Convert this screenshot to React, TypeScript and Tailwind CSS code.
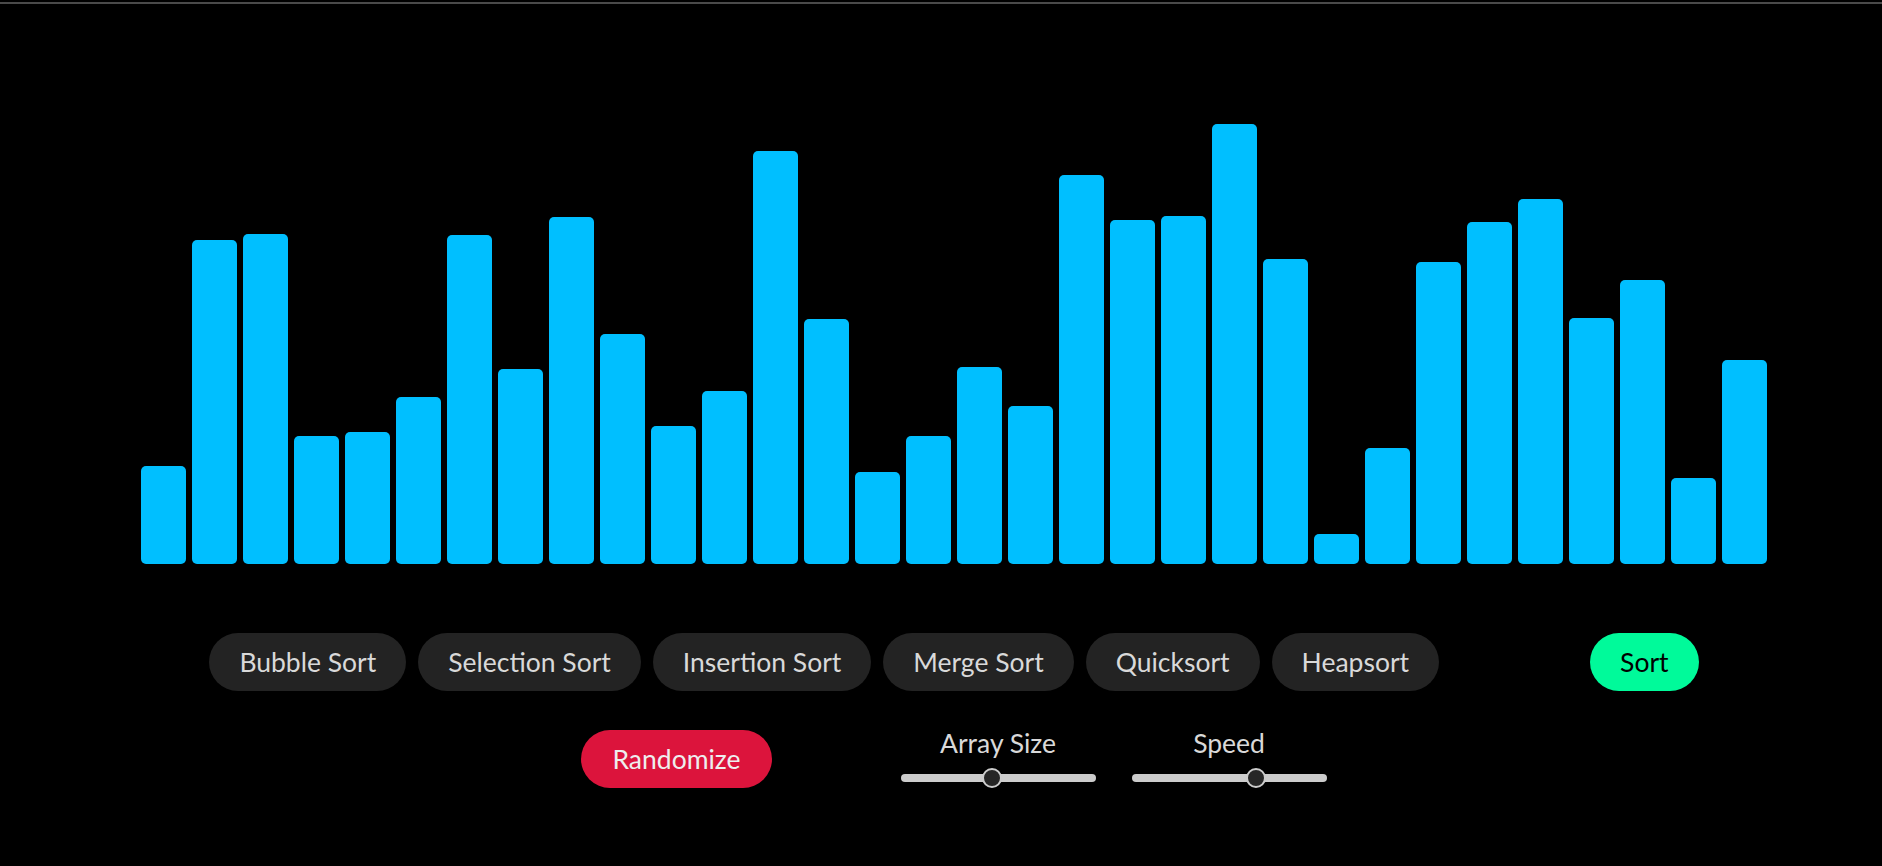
import { useState } from 'react'

const BAR_HEIGHTS = [
  98, 324, 330, 128, 132, 167, 329, 195, 347, 230, 138, 173, 413, 245, 92, 128,
  197, 158, 389, 344, 348, 440, 305, 30, 116, 302, 342, 365, 246, 284, 86, 204,
]

const ALGORITHMS = ['Bubble Sort', 'Selection Sort', 'Insertion Sort', 'Merge Sort', 'Quicksort', 'Heapsort']

const TRACK_W = 195
const THUMB_W = 20

function Slider({ label, value, min, max }: { label: string; value: number; min: number; max: number }) {
  const left = ((value - min) / (max - min)) * (TRACK_W - THUMB_W)
  return (
    <div className="flex flex-col items-center w-[195px] pb-[10px]">
      <span className="text-[26.5px] leading-[34px] text-[#d9d9d9]">{label}</span>
      <div className="relative mt-[14px] w-[195px] h-[8px] rounded-full bg-[#cccccc]">
        <div
          className="absolute top-[-6px] w-[20px] h-[20px] rounded-full bg-[#262626] border-2 border-[#cccccc]"
          style={{ left }}
        />
      </div>
    </div>
  )
}

export default function App() {
  const [bars] = useState(BAR_HEIGHTS)
  const [arraySize] = useState(32)
  const [speed] = useState(66)

  return (
    <div className="min-h-screen bg-black font-['Lato','Open_Sans',sans-serif]">
      <div className="pt-[2px]">
        <div className="h-[2px] bg-[#4a4a4a]" />
      </div>

      <div className="pl-[26px]">
        {/* bars */}
        <div className="h-[560px] flex items-end justify-center gap-[6px]">
          {bars.map((h, i) => (
            <div key={i} className="w-[45px] rounded-[5px] bg-[#00bfff]" style={{ height: h }} />
          ))}
        </div>

        {/* algorithm buttons */}
        <div className="mt-[69px] flex justify-center items-center">
          <div className="flex gap-[12px]">
            {ALGORITHMS.map((a) => (
              <button
                key={a}
                className="h-[58px] px-[30px] rounded-full bg-[#232323] text-[#d9d9d9] text-[26.5px] leading-none"
              >
                {a}
              </button>
            ))}
          </div>
          <button className="ml-[151px] h-[58px] px-[30px] rounded-full bg-[#00fa9a] text-black text-[26.5px] leading-none">
            Sort
          </button>
        </div>

        {/* controls */}
        <div className="mt-[35px] flex justify-center items-center">
          <button className="h-[58px] px-[31px] rounded-full bg-[#dc143c] text-[#eeeeee] text-[26.5px] leading-none">
            Randomize
          </button>
          <div className="ml-[129px] flex gap-[36px]">
            <Slider label="Array Size" value={arraySize} min={4} max={64} />
            <Slider label="Speed" value={speed} min={1} max={100} />
          </div>
        </div>
      </div>
    </div>
  )
}
